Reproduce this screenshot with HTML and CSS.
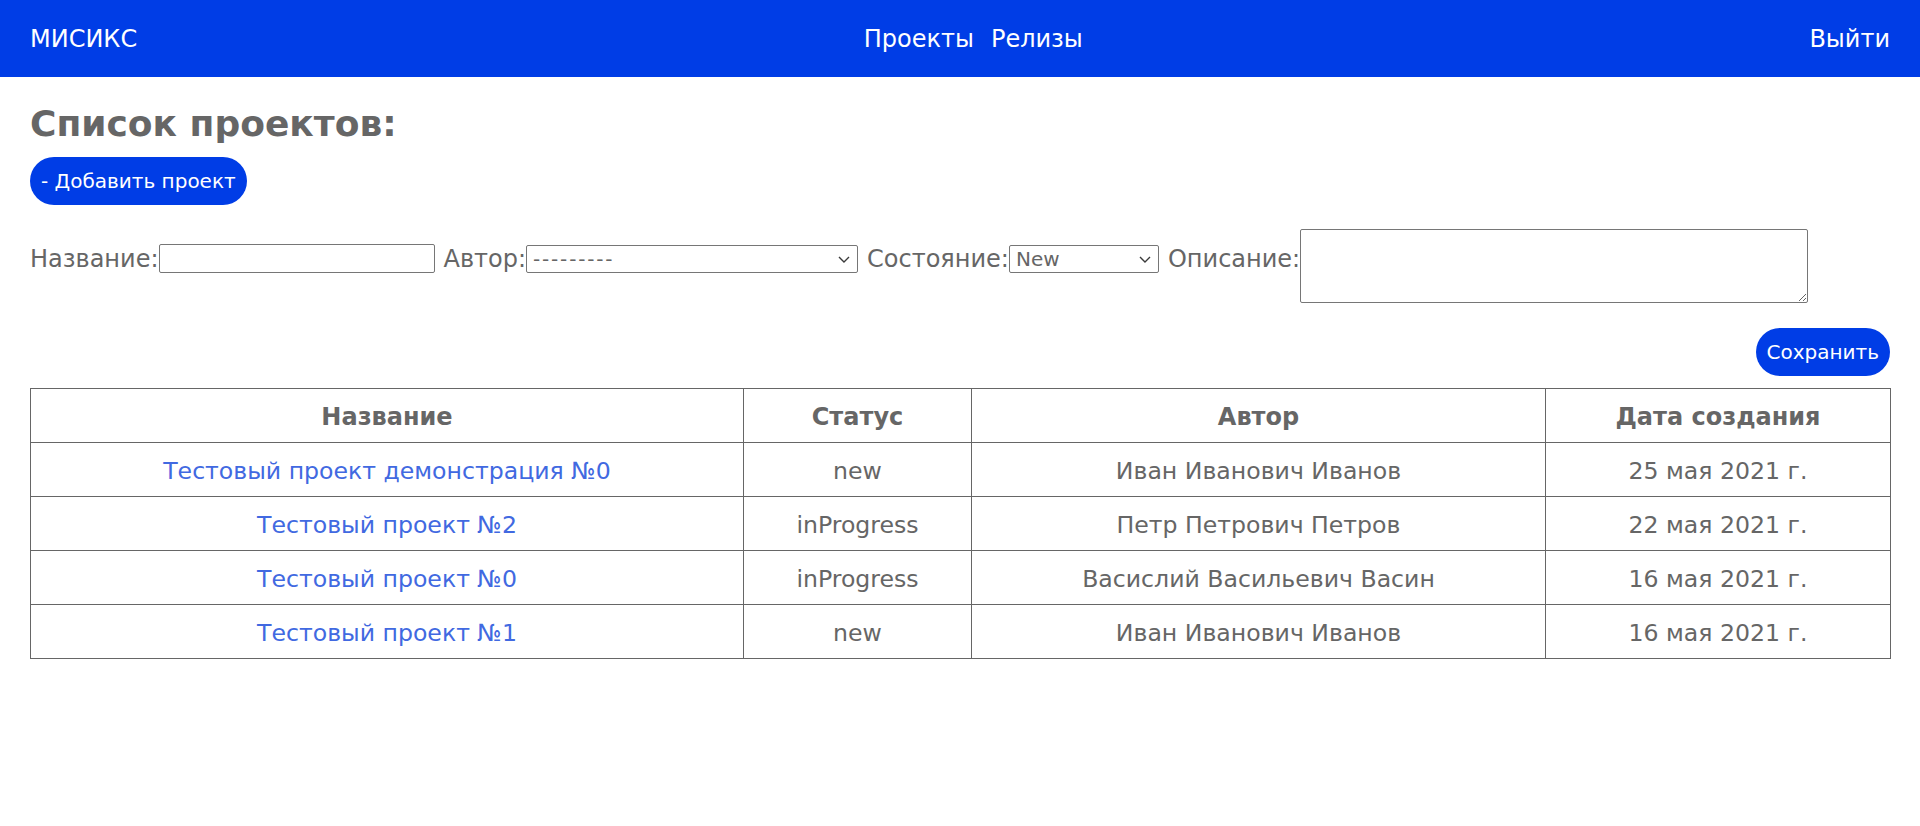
FILE: index.html
```html
<!DOCTYPE html>
<html lang="ru">
<head>
<meta charset="utf-8">
<title>МИСИКС — Список проектов</title>
<link rel="stylesheet" href="styles.css">
</head>
<body>
<header class="navbar">
  <a class="brand" href="#">МИСИКС</a>
  <nav class="nav-links">
    <a href="#">Проекты</a>
    <a href="#">Релизы</a>
  </nav>
  <a class="logout" href="#">Выйти</a>
</header>
<main class="content">
  <h1 class="page-title">Список проектов:</h1>
  <div class="toolbar">
    <button class="btn" type="button">- Добавить проект</button>
  </div>
  <form class="filter-form">
    <div class="filter-row">
      <label class="field-label" for="f-name">Название:</label><input id="f-name" class="field input-name" type="text">
      <label class="field-label gap" for="f-author">Автор:</label><span class="select-wrap"><select id="f-author" class="field select-author"><option>---------</option></select><svg class="chevron" viewBox="0 0 12 7" aria-hidden="true"><path d="M1 1l5 5 5-5" fill="none" stroke="#3a3a3a" stroke-width="1.4"/></svg></span>
      <label class="field-label gap" for="f-state">Состояние:</label><span class="select-wrap"><select id="f-state" class="field select-state"><option>New</option></select><svg class="chevron" viewBox="0 0 12 7" aria-hidden="true"><path d="M1 1l5 5 5-5" fill="none" stroke="#3a3a3a" stroke-width="1.4"/></svg></span>
      <label class="field-label gap" for="f-desc">Описание:</label><textarea id="f-desc" class="field desc"></textarea>
    </div>
    <div class="form-actions">
      <button class="btn" type="button">Сохранить</button>
    </div>
  </form>
  <table class="projects">
    <colgroup>
      <col class="c-name">
      <col class="c-status">
      <col class="c-author">
      <col class="c-date">
    </colgroup>
    <thead>
      <tr><th>Название</th><th>Статус</th><th>Автор</th><th>Дата создания</th></tr>
    </thead>
    <tbody>
      <tr><td><a href="#">Тестовый проект демонстрация №0</a></td><td>new</td><td>Иван Иванович Иванов</td><td>25 мая 2021 г.</td></tr>
      <tr><td><a href="#">Тестовый проект №2</a></td><td>inProgress</td><td>Петр Петрович Петров</td><td>22 мая 2021 г.</td></tr>
      <tr><td><a href="#">Тестовый проект №0</a></td><td>inProgress</td><td>Васислий Васильевич Васин</td><td>16 мая 2021 г.</td></tr>
      <tr><td><a href="#">Тестовый проект №1</a></td><td>new</td><td>Иван Иванович Иванов</td><td>16 мая 2021 г.</td></tr>
    </tbody>
  </table>
</main>
</body>
</html>
```
FILE: styles.css
```css
* { box-sizing: border-box; }

html, body {
  margin: 0;
  background: #ffffff;
}

body {
  font-family: "DejaVu Sans", Verdana, sans-serif;
  font-size: 24px;
  color: #666666;
}

a { text-decoration: none; }

.navbar {
  height: 77px;
  background: #003de6;
  display: flex;
  align-items: center;
  justify-content: space-between;
  padding: 0 30px;
}

.navbar a {
  color: #ffffff;
  font-size: 24px;
  line-height: 28px;
}

.nav-links {
  display: flex;
  gap: 17px;
}

.content {
  padding: 0 30px;
}

.page-title {
  margin: 26px 0 12px;
  font-size: 36px;
  line-height: 42px;
  font-weight: bold;
  color: #666666;
}

.toolbar {
  display: flex;
}

.btn {
  font-family: "DejaVu Sans", Verdana, sans-serif;
  font-size: 20px;
  line-height: 24px;
  height: 48px;
  padding: 12px 11px;
  border: none;
  border-radius: 24px;
  background: #003de6;
  color: #ffffff;
  cursor: pointer;
}

.filter-form {
  margin-top: 9px;
}

.filter-row {
  display: flex;
  align-items: center;
}

.field-label {
  line-height: 28px;
  white-space: nowrap;
}

.field-label.gap {
  margin-left: 9px;
}

.field {
  font-family: "DejaVu Sans", Verdana, sans-serif;
  font-size: 20px;
  color: #666666;
  border: 1px solid #767676;
  border-radius: 2px;
  background: #ffffff;
  margin: 0;
}

.input-name {
  width: 276px;
  height: 29px;
  padding: 1px 3px;
}

.select-wrap {
  position: relative;
  display: flex;
}

.select-wrap select {
  appearance: none;
  -webkit-appearance: none;
  padding: 0 24px 0 6px;
  height: 28px;
  line-height: 26px;
}

.select-author {
  width: 332px;
  letter-spacing: 1.8px;
  padding-left: 9px;
}

.select-state {
  width: 150px;
}

.chevron {
  position: absolute;
  right: 8px;
  top: 11px;
  width: 12px;
  height: 7px;
  pointer-events: none;
}

.desc {
  width: 508px;
  height: 74px;
  margin-top: 15px;
  padding: 2px;
  font-family: "DejaVu Sans Mono", monospace;
  font-size: 13px;
}

.form-actions {
  display: flex;
  justify-content: flex-end;
  margin-top: 25px;
}

.projects {
  margin-top: 12px;
  width: 100%;
  border-collapse: collapse;
  table-layout: fixed;
}

.c-name { width: 713px; }
.c-status { width: 228px; }
.c-author { width: 574px; }
.c-date { width: 345px; }

.projects th,
.projects td {
  border: 1px solid #666666;
  padding: 14px 8px 11px;
  line-height: 28px;
  text-align: center;
  font-size: 24px;
  color: #666666;
}

.projects td {
  font-size: 23.6px;
}

.projects th {
  font-weight: bold;
}

.projects td a {
  color: #4169e1;
}
```
